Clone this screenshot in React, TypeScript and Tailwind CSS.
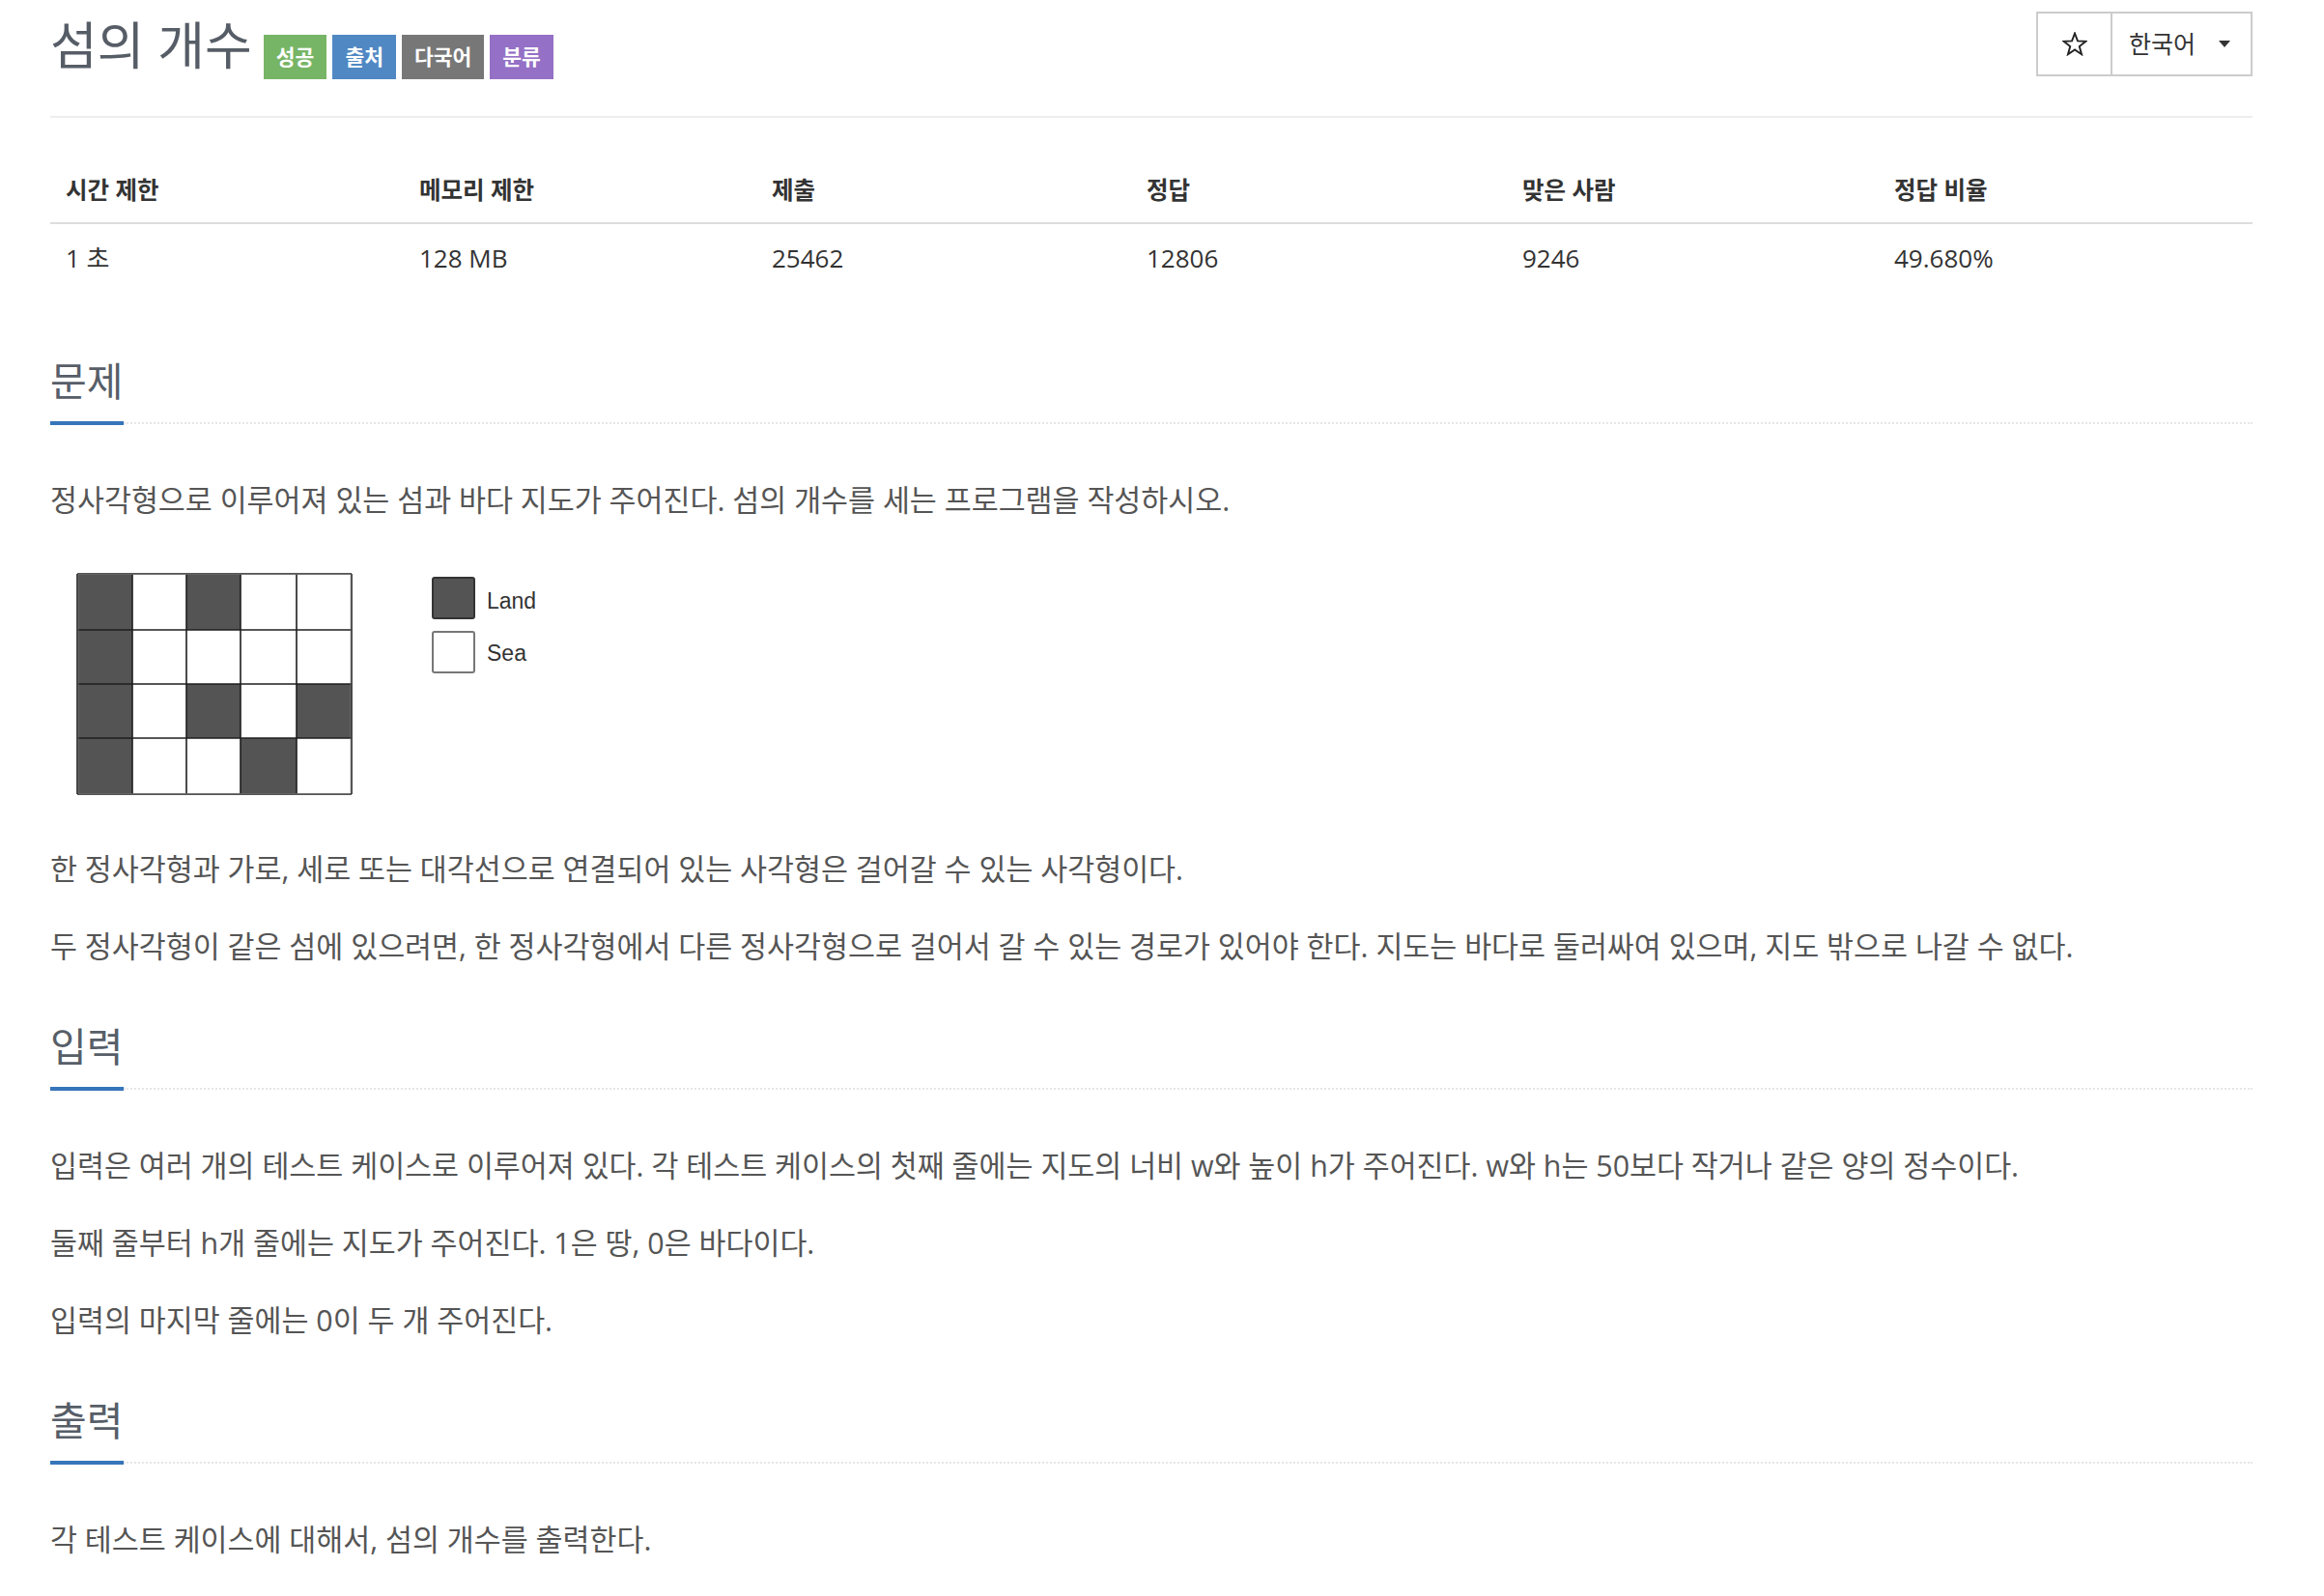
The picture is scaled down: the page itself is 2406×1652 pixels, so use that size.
import React from "react";

const FONT = { fontFamily: '"Open Sans", "Noto Sans CJK KR", sans-serif' };

function Badge({ color, children }: { color: string; children: React.ReactNode }) {
  return (
    <span className={`flex h-[46px] items-center px-[13px] text-[21.5px] font-semibold text-white ${color}`}>
      {children}
    </span>
  );
}

function Heading({ children }: { children: React.ReactNode }) {
  return (
    <div>
      <h2 className="text-[41px] leading-[48px] font-normal text-[#575e68]">{children}</h2>
      <div className="mt-[18px] flex items-center">
        <div className="h-[4px] w-[76px] bg-[#3675ba]" />
        <div className="h-0 flex-1 border-t-2 border-dotted border-[#e6e6e6]" />
      </div>
    </div>
  );
}

function P({ children, className = "" }: { children: React.ReactNode; className?: string }) {
  return <p className={`text-[30.4px] leading-[45px] text-[#555555] ${className}`}>{children}</p>;
}

function Figure() {
  const cols = [28, 85, 141, 197, 255, 312];
  const rows = [24, 82, 138, 194, 252];
  const land = [
    [1, 0, 1, 0, 0],
    [1, 0, 0, 0, 0],
    [1, 0, 1, 0, 1],
    [1, 0, 0, 1, 0],
  ];
  return (
    <svg width="560" height="276" viewBox="0 0 560 276" className="block">
      {land.map((r, ri) =>
        r.map((v, ci) => (
          <rect
            key={`${ri}-${ci}`}
            x={cols[ci]}
            y={rows[ri]}
            width={cols[ci + 1] - cols[ci]}
            height={rows[ri + 1] - rows[ri]}
            fill={v ? "#545454" : "#ffffff"}
          />
        ))
      )}
      {cols.map((x, i) => (
        <line key={`c${i}`} x1={x} y1={rows[0]} x2={x} y2={rows[4]} stroke="#1e1e1e" strokeWidth="1.6" />
      ))}
      {rows.map((y, i) => (
        <line key={`r${i}`} x1={cols[0]} y1={y} x2={cols[5]} y2={y} stroke="#1e1e1e" strokeWidth="1.6" />
      ))}
      <rect x="29" y="24.5" width="282" height="227" fill="none" stroke="#888" strokeWidth="0.6" />
      <rect x="396" y="28" width="43" height="42" rx="2" fill="#545454" stroke="#333" strokeWidth="2" />
      <rect x="396" y="84" width="43" height="42" rx="2" fill="#ffffff" stroke="#777" strokeWidth="2" />
      <text x="452" y="60" fontFamily='"Liberation Sans", Arial, sans-serif' fontSize="23" fill="#333">
        Land
      </text>
      <text x="452" y="114" fontFamily='"Liberation Sans", Arial, sans-serif' fontSize="23" fill="#333">
        Sea
      </text>
    </svg>
  );
}

function StarIcon() {
  // outline five-pointed star
  const pts: string[] = [];
  for (let i = 0; i < 10; i++) {
    const r = i % 2 === 0 ? 12 : 5;
    const a = -Math.PI / 2 + (i * Math.PI) / 5;
    pts.push(`${(13 + r * Math.cos(a)).toFixed(2)},${(13.5 + r * Math.sin(a)).toFixed(2)}`);
  }
  return (
    <svg width="26" height="25" viewBox="0 0 26 25">
      <polygon points={pts.join(" ")} fill="none" stroke="#222" strokeWidth="1.9" strokeLinejoin="miter" />
    </svg>
  );
}

export default function App() {
  const headers = ["시간 제한", "메모리 제한", "제출", "정답", "맞은 사람", "정답 비율"];
  const values = ["1 초", "128 MB", "25462", "12806", "9246", "49.680%"];
  return (
    <div className="min-h-[1652px] w-[2406px] bg-white" style={FONT}>
      <div className="ml-[52px] w-[2280px] pb-[40px]">
        {/* title row */}
        <div className="flex h-[122px] justify-between border-b-2 border-[#eeeeee]">
          <div className="flex items-start">
            <h1 className="mt-[17px] text-[53px] leading-[60px] font-normal text-[#565d66]">섬의 개수</h1>
            <div className="ml-[12px] mt-[36px] flex gap-[6px]">
              <Badge color="bg-[#77b566]">성공</Badge>
              <Badge color="bg-[#5088c4]">출처</Badge>
              <Badge color="bg-[#777777]">다국어</Badge>
              <Badge color="bg-[#9470c6]">분류</Badge>
            </div>
          </div>
          <div className="mt-[12px] flex h-[67px] border-2 border-[#cccccc]">
            <div className="flex w-[77px] items-center justify-center border-r-2 border-[#cccccc]">
              <StarIcon />
            </div>
            <div className="flex w-[143px] items-center pl-[17px] text-[25px] text-[#333]">
              <span>한국어</span>
              <span className="ml-[24px] h-0 w-0 border-x-[6.5px] border-t-[7px] border-x-transparent border-t-[#333]" />
            </div>
          </div>
        </div>

        {/* info table */}
        <div className="mt-[42px]">
          <div className="grid h-[68px] grid-cols-[366px_365px_388px_389px_385px_387px] border-b-2 border-[#dddddd]">
            {headers.map((h) => (
              <div key={h} className="flex items-center px-[16px] text-[24.5px] font-bold text-[#333]">
                {h}
              </div>
            ))}
          </div>
          <div className="grid h-[70px] grid-cols-[366px_365px_388px_389px_385px_387px]">
            {values.map((v) => (
              <div key={v} className="flex items-center px-[16px] text-[26px] text-[#333]">
                {v}
              </div>
            ))}
          </div>
        </div>

        {/* 문제 */}
        <div className="mt-[68px]">
          <Heading>문제</Heading>
        </div>
        <P className="mt-[55px]">
          정사각형으로 이루어져 있는 섬과 바다 지도가 주어진다. 섬의 개수를 세는 프로그램을 작성하시오.
        </P>
        <div className="mt-[30px]">
          <Figure />
        </div>
        <P className="mt-[31px]">
          한 정사각형과 가로, 세로 또는 대각선으로 연결되어 있는 사각형은 걸어갈 수 있는 사각형이다.
        </P>
        <P className="mt-[35px]">
          두 정사각형이 같은 섬에 있으려면, 한 정사각형에서 다른 정사각형으로 걸어서 갈 수 있는 경로가 있어야 한다. 지도는 바다로 둘러싸여 있으며, 지도 밖으로 나갈 수 없다.
        </P>

        {/* 입력 */}
        <div className="mt-[57px]">
          <Heading>입력</Heading>
        </div>
        <P className="mt-[55px]">
          입력은 여러 개의 테스트 케이스로 이루어져 있다. 각 테스트 케이스의 첫째 줄에는 지도의 너비 w와 높이 h가 주어진다. w와 h는 50보다 작거나 같은 양의 정수이다.
        </P>
        <P className="mt-[35px]">둘째 줄부터 h개 줄에는 지도가 주어진다. 1은 땅, 0은 바다이다.</P>
        <P className="mt-[35px]">입력의 마지막 줄에는 0이 두 개 주어진다.</P>

        {/* 출력 */}
        <div className="mt-[57px]">
          <Heading>출력</Heading>
        </div>
        <P className="mt-[55px]">각 테스트 케이스에 대해서, 섬의 개수를 출력한다.</P>
      </div>
    </div>
  );
}
